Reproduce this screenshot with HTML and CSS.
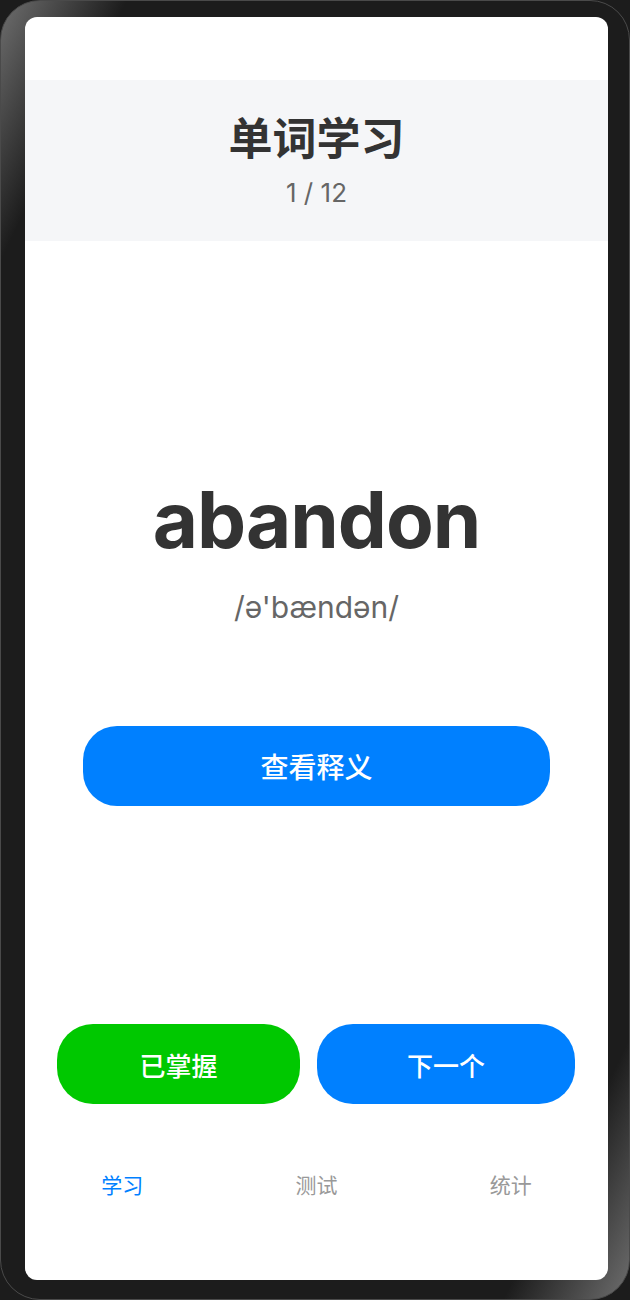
FILE: index.html
```html
<!DOCTYPE html>
<html>
<head>
    <meta charset="UTF-8">
    <title>单词学习</title>
    <link rel="stylesheet" href="styles.css">
</head>
<body>
    <div class="device">
        <div class="screen">
            <div class="status"></div>

            <div class="header">
                <h1 class="title">单词学习</h1>
                <div class="progress">1 / 12</div>
            </div>

            <div class="word-card">
                <div class="word">abandon</div>
                <div class="phonetic">/ə'bændən/</div>
                <button class="btn btn-blue btn-meaning">查看释义</button>
            </div>

            <div class="actions">
                <button class="btn btn-green btn-known">已掌握</button>
                <button class="btn btn-blue btn-next">下一个</button>
            </div>

            <div class="tabbar">
                <div class="tab active">学习</div>
                <div class="tab">测试</div>
                <div class="tab">统计</div>
            </div>
        </div>
    </div>
</body>
</html>
```

FILE: styles.css
```css
body {
    margin: 0;
    background-color: #1c1c1c;
    font-family: "Inter", "Noto Sans CJK SC", sans-serif;
}
.device {
    width: 630px;
    height: 1300px;
    box-sizing: border-box;
    padding: 16px 21px 19px 24px;
    border: 1px solid #4a4a4a;
    border-radius: 40px;
    background: linear-gradient(to bottom right, #6e6e6e 0%, #1c1c1c 10%, #1c1c1c 90%, #6e6e6e 100%);
}
.screen {
    height: 100%;
    background-color: #fff;
    border-radius: 12px;
    overflow: hidden;
    display: flex;
    flex-direction: column;
    padding-bottom: 46px;
    box-sizing: border-box;
}
.status {
    height: 63px;
}
.header {
    height: 161px;
    box-sizing: border-box;
    padding-top: 28px;
    background-color: #f5f6f8;
    text-align: center;
}
.title {
    margin: 0;
    font-family: "Noto Sans CJK SC", sans-serif;
    font-size: 44px;
    line-height: 56px;
    font-weight: bold;
    color: #333;
}
.progress {
    margin-top: 13px;
    font-size: 26px;
    line-height: 32px;
    color: #666;
}
.word-card {
    flex: 1;
    display: flex;
    flex-direction: column;
    align-items: center;
    padding-top: 229px;
}
.word {
    font-size: 78px;
    line-height: 100px;
    font-weight: bold;
    letter-spacing: -1px;
    color: #333;
}
.phonetic {
    margin-top: 17px;
    font-size: 30px;
    line-height: 40px;
    color: #666;
}
.btn {
    border: none;
    height: 80px;
    border-radius: 36px;
    color: #fff;
    font-family: "Noto Sans CJK SC", sans-serif;
    font-size: 26px;
    font-weight: 500;
    cursor: pointer;
}
.btn-blue {
    background-color: #0080ff;
}
.btn-green {
    background-color: #00c800;
}
.btn-meaning {
    margin-top: 99px;
    width: 467px;
    font-size: 28px;
    border-radius: 34px;
}
.actions {
    display: grid;
    grid-template-columns: 243fr 258fr;
    gap: 17px;
    padding: 0 33px 0 32px;
}
.tabbar {
    display: grid;
    grid-template-columns: 1fr 1fr 1fr;
    height: 100px;
    margin-top: 30px;
    align-items: center;
    text-align: center;
}
.tab {
    font-family: "Noto Sans CJK SC", sans-serif;
    font-size: 21px;
    color: #999;
}
.tab.active {
    color: #0080ff;
}
```
